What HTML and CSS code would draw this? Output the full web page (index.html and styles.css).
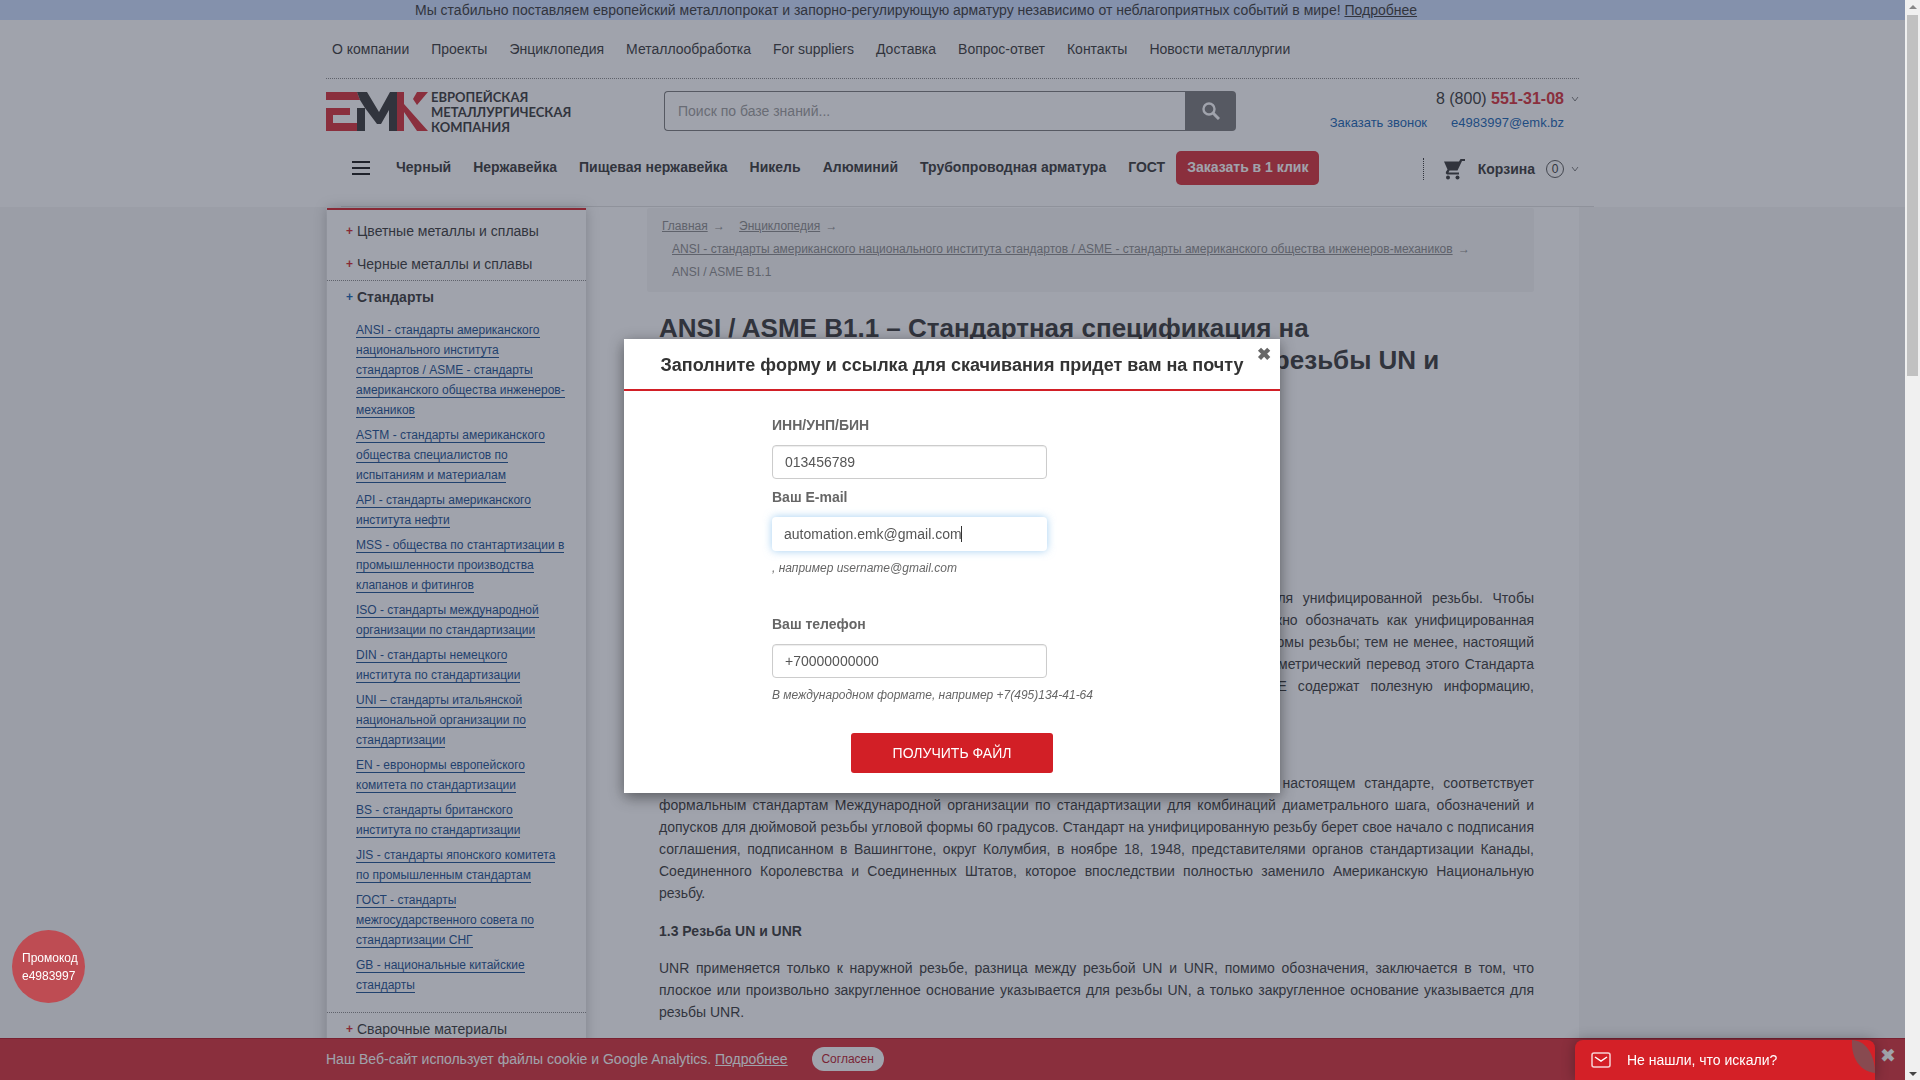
FILE: index.html
```html
<!DOCTYPE html>
<html lang="ru">
<head>
<meta charset="utf-8">
<title>ANSI / ASME B1.1</title>
<link rel="stylesheet" href="styles.css">
</head>
<body>
<div class="page">
  <div class="notice"><div class="container notice-text">Мы стабильно поставляем европейский металлопрокат и запорно-регулирующую арматуру независимо от неблагоприятных событий в мире! <a href="#">Подробнее</a></div></div>
  <header class="container header">
    <nav class="topnav">
      <a href="#">О компании</a><a href="#">Проекты</a><a href="#">Энциклопедия</a><a href="#">Металлообработка</a><a href="#">For suppliers</a><a href="#">Доставка</a><a href="#">Вопрос-ответ</a><a href="#">Контакты</a><a href="#">Новости металлургии</a>
    </nav>
    <div class="brand-row">
      <a class="logo" href="#" aria-label="ЕМК">
        <svg width="102" height="39" viewBox="0 0 102 39">
          <g fill="#d62a32"><path d="M0 0H31L34 8H0zM0 16H24V23H7V31H31V39H0zM71 0H78V12L102 39H91L78 20V39H71z"/><path d="M91 0H102L91 13L87 7z"/></g>
          <path fill="#333" d="M31 0H41L53 20L64 0H71V39H63V18L55 32H51L39 16V39H31V16H39L34 8z"/>
        </svg>
        <span class="logo-text"><span>ЕВРОПЕЙСКАЯ</span><span>МЕТАЛЛУРГИЧЕСКАЯ</span><span>КОМПАНИЯ</span></span>
      </a>
      <form class="search">
        <input type="text" placeholder="Поиск по базе знаний..." aria-label="Поиск">
        <button type="button" aria-label="Найти"><svg width="18" height="18" viewBox="0 0 18 18"><circle cx="7" cy="7" r="5.5" fill="none" stroke="#fff" stroke-width="2.4"/><path d="M11 11l6 6" stroke="#fff" stroke-width="3"/></svg></button>
      </form>
      <div class="contacts">
        <div class="phone">8 (800) <b>551-31-08</b></div>
        <div class="contact-links"><a href="#">Заказать звонок</a><a href="#">e4983997@emk.bz</a></div>
        <svg class="chev" width="8" height="6" viewBox="0 0 8 6"><path d="M1 1l3 4 3-4" fill="none" stroke="#777"/></svg>
      </div>
    </div>
    <div class="menu-row">
      <button class="burger" type="button" aria-label="Меню"><i></i><i></i><i></i></button>
      <nav class="menu"><a href="#">Черный</a><a href="#">Нержавейка</a><a href="#">Пищевая нержавейка</a><a href="#">Никель</a><a href="#">Алюминий</a><a href="#">Трубопроводная арматура</a><a href="#">ГОСТ</a></nav>
      <a class="order" href="#">Заказать в 1 клик</a>
      <div class="cart">
        <svg width="21" height="21" viewBox="0 0 21 21" fill="#333"><path d="M0 2.500H15L16.500 0H21V2H18L13.500 11.500H5.500L4.500 13.500H15V15.500H3Q1 14.500 2 12.800L3.500 10.500z"/><circle cx="4" cy="18.500" r="2"/><circle cx="13.500" cy="18.500" r="2"/></svg>
        <b>Корзина</b><span class="count">0</span>
        <svg width="8" height="6" viewBox="0 0 8 6"><path d="M1 1l3 4 3-4" fill="none" stroke="#777"/></svg>
      </div>
    </div>
  </header>
  <div class="main-bg">
    <div class="container main">
      <aside class="side">
        <a class="cat" href="#"><i>+</i>Цветные металлы и сплавы</a>
        <a class="cat" href="#"><i>+</i>Черные металлы и сплавы</a>
        <div class="group">
          <a class="cat current" href="#"><i>+</i>Стандарты</a>
          <ul>
            <li><a href="#">ANSI - стандарты американского национального института стандартов / ASME - стандарты американского общества инженеров-механиков</a></li>
            <li><a href="#">ASTM - стандарты американского общества специалистов по испытаниям и материалам</a></li>
            <li><a href="#">API - стандарты американского института нефти</a></li>
            <li><a href="#">MSS - общества по стантартизации в промышленности производства клапанов и фитингов</a></li>
            <li><a href="#">ISO - стандарты международной организации по стандартизации</a></li>
            <li><a href="#">DIN - стандарты немецкого института по стандартизации</a></li>
            <li><a href="#">UNI – стандарты итальянской национальной организации по стандартизации</a></li>
            <li><a href="#">EN - евронормы европейского комитета по стандартизации</a></li>
            <li><a href="#">BS - стандарты британского института по стандартизации</a></li>
            <li><a href="#">JIS - стандарты японского комитета по промышленным стандартам</a></li>
            <li><a href="#">ГОСТ - стандарты межгосударственного совета по стандартизации СНГ</a></li>
            <li><a href="#">GB - национальные китайские стандарты</a></li>
          </ul>
        </div>
        <a class="cat" href="#"><i>+</i>Сварочные материалы</a>
      </aside>
      <main class="content">
        <nav class="crumbs">
          <div><span><a href="#">Главная</a> →</span><span><a href="#">Энциклопедия</a> →</span></div>
          <div class="sub"><span><a href="#">ANSI - стандарты американского национального института стандартов / ASME - стандарты американского общества инженеров-механиков</a> →</span></div>
          <div class="sub">ANSI / ASME B1.1</div>
        </nav>
        <article>
          <h1>ANSI / ASME B1.1 – Стандартная спецификация на унифицированные дюймовые и цилиндровые резьбы UN и UNR&nbsp;(формы&nbsp;резьбы)</h1>
          <h2>1 Область применения</h2>
          <p class="lines"><span>Настоящий стандарт определяет профиль, классы, размеры, допуски и обозначения для унифицированной резьбы. Чтобы</span><span>подчеркнуть отдельно, что эта резьба основана на дюймовых модулях, ее возможно нужно обозначать как унифицированная</span><span>дюймовая резьба. В настоящем стандарте приведены также другие профили и основные формы резьбы; тем не менее, настоящий</span><span>стандарт распространяется только на унифицированные формы резьбы. Также произведен метрический перевод этого Стандарта</span><span>и представлен в отдельном документе. Необязательные приложения A, B, C, D и E содержат полезную информацию,</span><span class="last">дополняющую настоящий стандарт.</span></p>
          <h3>1.2 Международная стандартизация</h3>
          <p>Серия унифицированной дюймовой резьбы, которая определена и подробно указана в настоящем стандарте, соответствует формальным стандартам Международной организации по стандартизации для комбинаций диаметрального шага, обозначений и допусков для дюймовой резьбы угловой формы 60 градусов. Стандарт на унифицированную резьбу берет свое начало с подписания соглашения, подписанном в Вашингтоне, округ Колумбия, в ноябре 18, 1948, представителями органов стандартизации Канады, Соединенного Королевства и Соединенных Штатов, которое впоследствии полностью заменило Американскую Национальную резьбу.</p>
          <h3>1.3 Резьба UN и UNR</h3>
          <p>UNR применяется только к наружной резьбе, разница между резьбой UN и UNR, помимо обозначения, заключается в том, что плоское или произвольно закругленное основание указывается для резьбы UN, а только закругленное основание указывается для резьбы UNR.</p>
        </article>
      </main>
    </div>
  </div>
</div>
<div class="cookie"><div class="container cookie-in">Наш Веб-сайт использует файлы cookie и Google Analytics. <a href="#">Подробнее</a><button type="button">Согласен</button></div>
  <button class="cookie-x" type="button" aria-label="Закрыть">✖</button></div>
<div class="overlay"></div>
<div class="promo">Промокод<br>e4983997</div>
<button class="chat" type="button"><svg width="20" height="16" viewBox="0 0 20 16"><rect x="1" y="1" width="18" height="14" rx="2" fill="none" stroke="#fff" stroke-opacity=".8" stroke-width="1.500"/><path d="M4 5l6 4 6-4" fill="none" stroke="#fff" stroke-width="1.500"/></svg>Не нашли, что искали?
  <svg class="leaf" width="24" height="33" viewBox="0 0 24 33"><path d="M1 0C14 0 24 14 24 33C8 31 0 17 1 0z" fill="#884a50"/></svg></button>
<div class="modal-wrap">
  <form class="modal">
    <div class="modal-head">Заполните форму и ссылка для скачивания придет вам на почту<button class="modal-x" type="button" aria-label="Закрыть">✖</button></div>
    <div class="fields">
      <label for="inn">ИНН/УНП/БИН</label><input id="inn" type="text" value="013456789">
      <label for="mail">Ваш E-mail</label>
      <div class="mail-box"><input id="mail" class="focus" type="text" value="automation.emk@gmail.com"><i class="caret"></i></div>
      <em>, например username@gmail.com</em>
      <label class="tel" for="tel">Ваш телефон</label><input id="tel" type="text" value="+70000000000">
      <em>В международном формате, например +7(495)134-41-64</em>
    </div>
    <button class="submit" type="button">ПОЛУЧИТЬ ФАЙЛ</button>
  </form>
</div>
<div class="scroll"><i class="arrow up"></i><div class="thumb"></div><i class="arrow down"></i></div>
</body>
</html>
```
FILE: styles.css
```css
*{box-sizing:border-box}
html,body{height:100%;overflow:hidden}
body{margin:0;font:14px/22px "Liberation Sans",Arial,sans-serif;color:#333;background:#f5f5f5}
a{color:inherit;text-decoration:none}
button,input{font:inherit;color:inherit;margin:0}
button{cursor:pointer;border:0;background:none;padding:0}
.page{margin-right:15px;background:#fff}
.container{width:1253px;max-width:100%;margin:0 auto}
.notice{background:#cbdeff;height:20px;line-height:20px}
.notice-text{padding-left:89px;white-space:nowrap}
.notice a{text-decoration:underline}
.topnav{display:flex;gap:22px;height:59px;padding:18px 6px 0;border-bottom:1px dotted #888;white-space:nowrap}
.brand-row{display:flex;height:65px;padding-top:12px;align-items:flex-start}
.logo{display:flex;gap:3px;flex:0 0 338px}
.logo svg{margin-top:1px}
.logo-text{display:flex;flex-direction:column;font:bold 13px/15px Lato,"Open Sans",sans-serif;color:#333;margin-top:-1px}
.search{display:flex;flex:0 0 572px;height:40px}
.search input{flex:1;min-width:0;border:1px solid #777;border-right:0;border-radius:4px 0 0 4px;padding:0 13px;background:#fff}
.search input::placeholder{color:#999;opacity:1}
.search button{width:51px;background:#777;border-radius:0 4px 4px 0;display:flex;align-items:center;justify-content:center}
.contacts{position:relative;margin-left:auto;padding-right:15px;text-align:right}
.phone{font-size:16px;line-height:16px}
.phone b{color:#d62a32}
.contact-links{display:flex;gap:24px;font-size:13px;line-height:20px;margin-top:6px;color:#0f5eb0}
.chev{position:absolute;right:0;top:5px}
.menu-row{display:flex;height:63px;margin:0 -15px 0 15px;padding:7px 15px 0 11px;align-items:flex-start;line-height:32px;font-weight:bold;white-space:nowrap;border-bottom:1px solid #e0e0e0}
.burger{display:flex;flex-direction:column;gap:4px;width:18px;margin:10px 26px 0 0}
.burger i{height:2px;background:#111}
.menu{display:flex;gap:22px}
.order{background:#d62a32;color:#fff;border-radius:5px;height:34px;padding:0 11px;margin-left:11px}
.cart{display:flex;align-items:center;margin:7px 0 0 auto;height:22px;border-left:1px dotted #333;padding-left:20px;line-height:20px}
.cart b{margin-left:13px}
.count{width:18px;height:18px;border:1px solid #555;border-radius:50%;margin:0 7px 0 11px;font-weight:normal;font-size:12px;line-height:16px;text-align:center}
.main-bg{background:#f5f5f5}
.main{background:#fff;display:flex;align-items:flex-start;padding-top:1px}
.side{flex:0 0 259px;margin-left:1px;border-top:2px solid #d21f26;background:#fff;box-shadow:0 0 12px rgba(0,0,0,.25);padding-top:5px;height:1100px}
.cat{display:flex;height:33px;line-height:33px;padding-left:19px}
.cat i{color:#d21f26;font:bold 12px/33px "Liberation Sans",Arial,sans-serif;width:11px}
.current{font-weight:bold}
.current i{color:#0f5eb0}
.group{border:1px dotted #888;border-width:1px 0;margin-top:-1px}
.side ul{list-style:none;margin:0;padding:6px 21px 12px 29px;font-size:12px;line-height:20px;color:#134a8c}
.side li{margin-bottom:5px}
.side li a{border-bottom:1px solid #134a8c}
.content{margin-left:61px;flex:0 0 887px}
.crumbs{background:#f5f5f5;border-radius:3px;height:84px;padding:7px 15px;font-size:12px;line-height:23px;color:#888;white-space:nowrap}
.crumbs div{display:flex;gap:14px}
.crumbs .sub{padding-left:10px}
.crumbs a{text-decoration:underline;margin-right:2px}
article{padding-left:12px}
h1{font-size:26px;line-height:32px;margin:20px 0 140px}
h2,h3{font-size:14px;line-height:22px;margin:0 0 15px}
h2{margin-bottom:17px}
p{margin:0 0 16px;text-align:justify}
.lines span{display:block;text-align-last:justify}
.lines .last{text-align-last:left}
.cookie{position:fixed;left:0;right:15px;bottom:0;height:42px;background:#d62a32;border-top:1px solid #b8121f;color:#fff;line-height:40px;z-index:2}
.cookie-in{display:flex;align-items:center;height:40px;line-height:38px;white-space:pre}
.cookie a{text-decoration:underline}
.cookie-in button{background:#fff;color:#b8121f;border-radius:12px;height:24px;width:72px;font-size:12px;line-height:24px;margin-left:24px}
.cookie-x{position:absolute;right:9px;top:6px;font-size:19px;line-height:22px}
.overlay{position:fixed;inset:0 15px 0 0;background:rgba(48,55,74,.46);z-index:3}
.promo{position:fixed;left:12px;bottom:77px;width:73px;height:73px;border-radius:50%;background:#be4c53;color:#fff;font-size:12px;line-height:18px;padding:19px 0 0 10px;z-index:4}
.chat{position:fixed;right:45px;bottom:0;width:300px;height:40px;background:#d42027;color:#fff;border-radius:8px 8px 0 0;display:flex;align-items:center;gap:16px;padding-left:16px;box-shadow:0 0 14px rgba(0,0,0,.3);z-index:4}
.leaf{position:absolute;right:0;top:0}
.modal-wrap{position:fixed;inset:339px 16px auto 0;display:flex;justify-content:center;z-index:5}
.modal{width:656px;background:#fff;box-shadow:0 4px 14px rgba(0,0,0,.45);padding-bottom:20px;color:#666}
.modal-head{position:relative;text-align:center;font-size:18px;font-weight:bold;color:#333;line-height:24px;padding:14px 0 12px;border-bottom:2px solid #d21f26}
.modal-x{position:absolute;right:9px;top:5px;font-size:17px;line-height:22px;color:#666}
.fields{display:flex;flex-direction:column;align-items:flex-start;padding:24px 148px 28px}
.fields label{font-weight:bold;line-height:20px;margin-bottom:10px}
.fields input{display:block;width:275px;height:34px;border:1px solid #ccc;border-radius:4px;padding:0 12px;color:#555;box-shadow:inset 0 1px 1px rgba(0,0,0,.075);background:#fff}
.fields input+label{margin-top:8px}
.mail-box{position:relative}
.fields .focus{border-color:transparent;box-shadow:0 0 8px rgba(102,175,233,.6);padding-left:11px}
.caret{position:absolute;left:189px;top:9px;width:1px;height:16px;background:#333}
.fields em{font-size:12px;line-height:20px;margin-top:7px}
.fields .tel{margin-top:36px}
.submit{display:block;width:202px;height:40px;margin:0 auto;background:#d21f26;color:#fff;border-radius:3px}
.scroll{position:fixed;right:0;top:0;bottom:0;width:15px;background:#f0f0f0;z-index:9;display:flex;flex-direction:column;align-items:center}
.thumb{width:11px;height:361px;background:#c1c1c1;margin-top:6px}
.arrow{border:4px solid transparent}
.up{border-bottom-color:#888;margin-top:1px}
.down{border-top-color:#444;margin-top:auto}
```
